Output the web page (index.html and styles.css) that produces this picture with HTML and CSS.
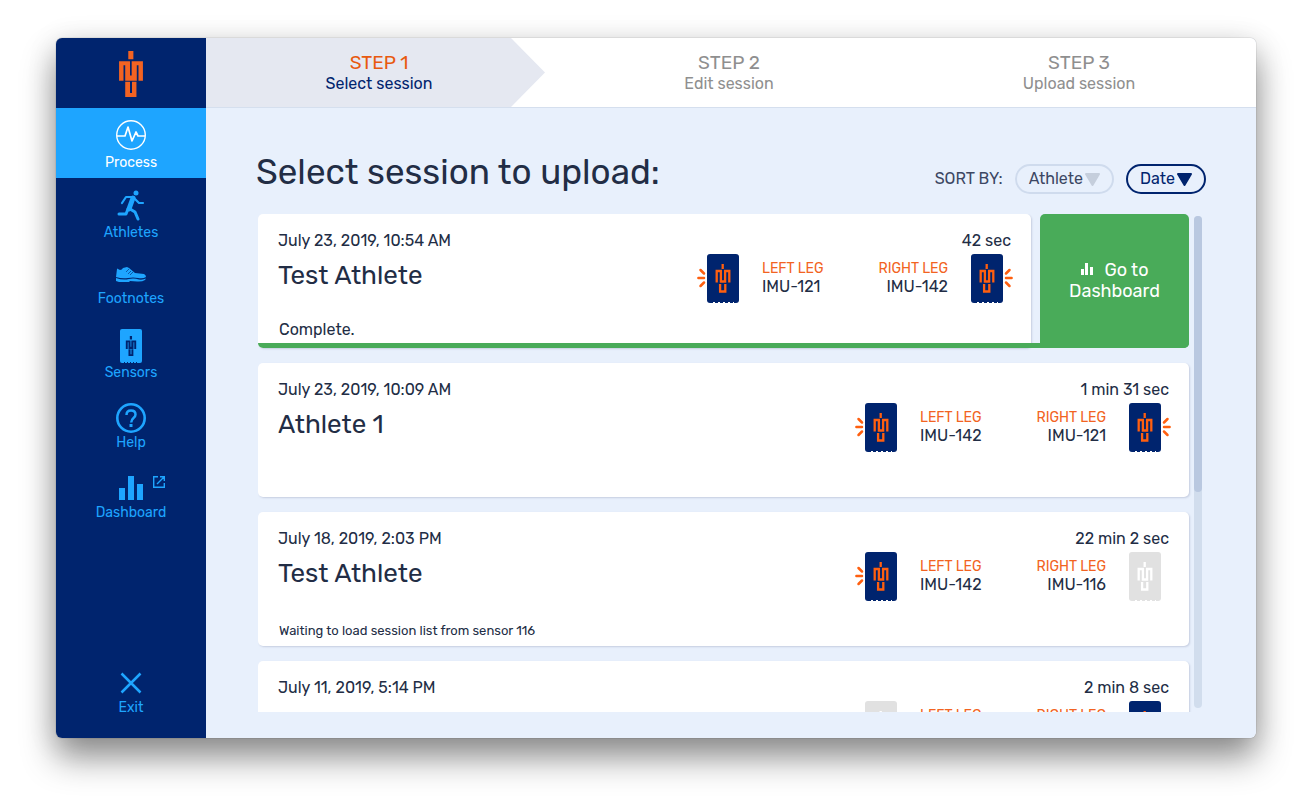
FILE: index.html
```html
<!DOCTYPE html>
<html lang="en">
<head>
  <meta charset="UTF-8">
  <title>Select session</title>
  <link rel="stylesheet" href="styles.css">
</head>
<body>

  <!-- shared shapes -->
  <svg class="defs" aria-hidden="true">
    <symbol id="logo" viewBox="0 0 70 135">
      <path d="M27 0H42V24H27ZM0 30H32V72H37V30H70V87H57V42H52V87H18V42H13V87H0ZM18 90H32V123H38V90H51V135H18Z"/>
    </symbol>
    <symbol id="logo-thin" viewBox="0 0 15 29">
      <path d="M7.200 0V5M1.200 18.500V7H5.400V17.500H9.600V7H13.800V18.500M4.600 20V27.500H9.800V20" fill="none" stroke="currentColor" stroke-width="2.300"/>
    </symbol>
    <symbol id="sensor" viewBox="0 0 32 49">
      <path class="sensor-body" d="M3 0H29Q32 0 32 3V46Q32 49 29 49H3Q0 49 0 46V3Q0 0 3 0Z"/>
      <path d="M6 48.500H27" stroke="#fff" stroke-width="1" stroke-dasharray="2 3"/>
      <use href="#logo-thin" x="8" y="10" width="16" height="29"/>
    </symbol>
    <symbol id="rays" viewBox="0 0 10 20">
      <path d="M3.500 2L7 5.500M1.400 10H7M3.500 18L7 14.500" fill="none" stroke="#ff5f0f" stroke-width="2.500" stroke-linecap="round"/>
    </symbol>
  </svg>

  <div class="window">

    <nav class="sidebar">
      <a class="brand" href="#" aria-label="Home">
        <svg width="24" height="46"><use href="#logo"/></svg>
      </a>
      <a class="nav-item active" href="#">
        <svg width="30" height="34" fill="none" stroke="currentColor">
          <circle cx="15" cy="16" r="14.300" stroke-width="1.400"/>
          <path d="M1 17H9L12 8L16 22L20 13L22 17H29" stroke-width="1.700" stroke-linejoin="round"/>
        </svg>
        <span>Process</span>
      </a>
      <a class="nav-item" href="#">
        <svg width="30" height="34" fill="none" stroke="currentColor" stroke-linecap="round" stroke-linejoin="round">
          <circle cx="20" cy="4" r="2.500" fill="currentColor" stroke="none"/>
          <path d="M6 14L10 8H17L23 14H27" stroke-width="2.200"/>
          <path d="M17 9L13 20" stroke-width="5"/>
          <path d="M12 20L10 25H3M14 20L19 23L22 30" stroke-width="3"/>
        </svg>
        <span>Athletes</span>
      </a>
      <a class="nav-item" href="#">
        <svg width="30" height="25" fill="currentColor">
          <path d="M1 5Q1 4 2 5L4 6Q6 6 7 4L11 3L13 4L19 9L28 10Q30 11 30 13Q27 15 22 14Q17 13 12 14Q6 15 0 13Z"/>
          <path d="M0 14Q7 16.500 13 15Q18 14 23 15.500Q27 16 30 14.500L29 16Q26 18 21 17.500L14 17L13 18H3L0 17Z"/>
          <path d="M10 8L13 5M12 10L15 7M14 11L17 8" stroke="#00246e" stroke-width=".6"/>
        </svg>
        <span>Footnotes</span>
      </a>
      <a class="nav-item" href="#">
        <svg width="22" height="34">
          <path d="M2 0H20Q22 0 22 2V32Q22 34 20 34H2Q0 34 0 32V2Q0 0 2 0Z" fill="currentColor"/>
          <path d="M4 33.500H19" stroke="#00246e" stroke-dasharray="1 2"/>
          <use class="cutout" href="#logo" x="5" y="7" width="12" height="20"/>
        </svg>
        <span>Sensors</span>
      </a>
      <a class="nav-item" href="#">
        <svg width="30" height="34" fill="none" stroke="currentColor">
          <circle cx="15" cy="19" r="13.700" stroke-width="2.600"/>
          <path d="M10.500 16Q10.500 11.500 15 11.500T19.500 15.500Q19.500 17.500 17.500 19T15.200 23.500" stroke-width="2.500"/>
          <path d="M15 25V28" stroke-width="3"/>
        </svg>
        <span>Help</span>
      </a>
      <a class="nav-item" href="#">
        <svg width="70" height="34">
          <path d="M23 19H29V31H23ZM32 7H38V31H32ZM41 15H47V31H41Z" fill="currentColor"/>
          <path d="M62 7.700H57.700V18.300H68.300V14M64 7.700H68.300V12M68 8L61 15" fill="none" stroke="currentColor" stroke-width="1.400"/>
        </svg>
        <span>Dashboard</span>
      </a>
      <a class="nav-item exit" href="#">
        <svg width="30" height="34" fill="none" stroke="currentColor">
          <path d="M5.500 9.500L24.500 28.500M24.500 9.500L5.500 28.500" stroke-width="2.500"/>
        </svg>
        <span>Exit</span>
      </a>
    </nav>

    <div class="content">

      <ol class="steps">
        <li class="step current"><b>STEP 1</b><span>Select session</span></li>
        <li class="step"><b>STEP 2</b><span>Edit session</span></li>
        <li class="step"><b>STEP 3</b><span>Upload session</span></li>
      </ol>

      <main class="page">
        <header class="page-header">
          <h1>Select session to upload:</h1>
          <div class="sort">
            <span class="sort-label">SORT BY:</span>
            <button class="sort-button" type="button">Athlete
              <svg width="15" height="13"><path d="M1 1H14L7.500 12Z"/></svg>
            </button>
            <button class="sort-button selected" type="button">Date
              <svg width="15" height="13"><path d="M1 1H14L7.500 12Z"/></svg>
            </button>
          </div>
        </header>

        <div class="list-area">
          <div class="session-list">

            <div class="session-row complete">
              <article class="card">
                <div class="card-top"><time>July 23, 2019, 10:54 AM</time><span>42 sec</span></div>
                <div class="card-main">
                  <h2>Test Athlete</h2>
                  <div class="legs">
                    <svg class="sensor"><use href="#rays" x="-10" y="14" width="10" height="20"/><use href="#sensor" width="32" height="49"/></svg>
                    <div class="leg"><span>LEFT LEG</span>IMU-121</div>
                    <div class="leg right"><span>RIGHT LEG</span>IMU-142</div>
                    <svg class="sensor"><use href="#rays" x="-42" y="14" width="10" height="20" transform="scale(-1 1)"/><use href="#sensor" width="32" height="49"/></svg>
                  </div>
                </div>
                <p class="status">Complete.</p>
              </article>
              <a class="go-dashboard" href="#">
                <span><svg width="14" height="14"><path d="M1 7H4V13H1ZM5 1H8V13H5ZM10 5H13V13H10Z"/></svg>Go to<br>Dashboard</span>
              </a>
            </div>

            <div class="session-row">
              <article class="card">
                <div class="card-top"><time>July 23, 2019, 10:09 AM</time><span>1 min 31 sec</span></div>
                <div class="card-main">
                  <h2>Athlete 1</h2>
                  <div class="legs">
                    <svg class="sensor"><use href="#rays" x="-10" y="14" width="10" height="20"/><use href="#sensor" width="32" height="49"/></svg>
                    <div class="leg"><span>LEFT LEG</span>IMU-142</div>
                    <div class="leg right"><span>RIGHT LEG</span>IMU-121</div>
                    <svg class="sensor"><use href="#rays" x="-42" y="14" width="10" height="20" transform="scale(-1 1)"/><use href="#sensor" width="32" height="49"/></svg>
                  </div>
                </div>
              </article>
            </div>

            <div class="session-row">
              <article class="card">
                <div class="card-top"><time>July 18, 2019, 2:03 PM</time><span>22 min 2 sec</span></div>
                <div class="card-main">
                  <h2>Test Athlete</h2>
                  <div class="legs">
                    <svg class="sensor"><use href="#rays" x="-10" y="14" width="10" height="20"/><use href="#sensor" width="32" height="49"/></svg>
                    <div class="leg"><span>LEFT LEG</span>IMU-142</div>
                    <div class="leg right"><span>RIGHT LEG</span>IMU-116</div>
                    <svg class="sensor off"><use href="#sensor" width="32" height="49"/></svg>
                  </div>
                </div>
                <p class="status small">Waiting to load session list from sensor 116</p>
              </article>
            </div>

            <div class="session-row">
              <article class="card">
                <div class="card-top"><time>July 11, 2019, 5:14 PM</time><span>2 min 8 sec</span></div>
                <div class="card-main">
                  <h2></h2>
                  <div class="legs">
                    <svg class="sensor off"><use href="#sensor" width="32" height="49"/></svg>
                    <div class="leg"><span>LEFT LEG</span></div>
                    <div class="leg right"><span>RIGHT LEG</span></div>
                    <svg class="sensor"><use href="#sensor" width="32" height="49"/></svg>
                  </div>
                </div>
              </article>
            </div>

          </div>
          <div class="scrollbar"><div class="thumb"></div></div>
        </div>
      </main>
    </div>
  </div>

</body>
</html>
```
FILE: styles.css
```css
* {
  box-sizing: border-box;
}

body {
  margin: 0;
  height: 100vh;
  padding: 38px 56px 74px;
  background: #fff;
  color: #222d45;
  font: 16px/18px Rubik, Roboto, sans-serif;
}

a {
  color: inherit;
  text-decoration: none;
}

h1, h2, p, ol {
  margin: 0;
  padding: 0;
  font-weight: 400;
}

svg {
  display: block;
  flex: none;
}

.defs {
  position: absolute;
  width: 0;
  height: 0;
}

.window {
  display: flex;
  height: 100%;
  border-radius: 6px;
  overflow: hidden;
  box-shadow: 0 0 1px rgba(0,0,0,.6), 0 20px 34px rgba(0,0,0,.42), 0 4px 30px rgba(0,0,0,.12);
}

/* sidebar */
.sidebar {
  display: flex;
  flex-direction: column;
  flex: none;
  width: 150px;
  background: #00246e;
  color: #1ea5ff;
  font-size: 14px;
  line-height: 20px;
}

.brand {
  display: flex;
  justify-content: center;
  align-items: center;
  height: 70px;
  padding-top: 2px;
  fill: #f26322;
}

.nav-item {
  display: flex;
  flex-direction: column;
  align-items: center;
  justify-content: center;
  height: 70px;
  padding-top: 6px;
}

.nav-item.active {
  background: #1ea5ff;
  color: #fff;
}

.nav-item.exit {
  margin-top: auto;
  margin-bottom: 15px;
}

.cutout {
  fill: #00246e;
}

/* steps */
.content {
  display: flex;
  flex-direction: column;
  flex: 1;
  min-width: 0;
  background: #e8f0fc;
}

.steps {
  display: grid;
  grid-template-columns: repeat(3, 1fr);
  flex: none;
  height: 70px;
  background: #fff;
  border-bottom: 1px solid #d5dfee;
  list-style: none;
}

.step {
  display: flex;
  flex-direction: column;
  align-items: center;
  justify-content: center;
  padding-right: 4px;
  color: #8f8f8f;
  line-height: 20px;
}

.step b {
  font-size: 19px;
  font-weight: 400;
  line-height: 22px;
}

.step.current {
  margin-right: 11px;
  padding-right: 0;
  padding-left: 7px;
  background: #e5e8f1;
  color: #00246e;
  clip-path: polygon(0 0, calc(100% - 34px) 0, 100% 50%, calc(100% - 34px) 100%, 0 100%);
}

.step.current b {
  color: #e8590f;
}

/* page */
.page {
  display: flex;
  flex-direction: column;
  flex: 1;
  min-height: 0;
  padding: 42px 50px 26px;
}

.page-header {
  display: flex;
  justify-content: space-between;
  align-items: flex-end;
  margin-bottom: 20px;
}

h1 {
  font-size: 35px;
  line-height: 44px;
}

.sort {
  display: flex;
  align-items: center;
  gap: 12px;
}

.sort-label {
  color: #3c4763;
}

.sort-button {
  display: flex;
  align-items: center;
  gap: 2px;
  height: 30px;
  padding: 0 12px;
  border: 2px solid #cfdbed;
  border-radius: 15px;
  background: none;
  color: #3c4763;
  font: inherit;
}

.sort-button svg {
  fill: #c5cedc;
  stroke: #c5cedc;
  stroke-linejoin: round;
  stroke-width: 2;
}

.sort-button.selected {
  border-color: #00246e;
  color: #00246e;
}

.sort-button.selected svg {
  fill: #00246e;
  stroke: #00246e;
}

/* session list */
.list-area {
  display: flex;
  gap: 2px;
  flex: 1;
  min-height: 0;
  padding: 0 4px 0 2px;
}

.session-list {
  display: flex;
  flex-direction: column;
  gap: 15px;
  flex: 1;
  padding-right: 3px;
  overflow: hidden;
}

.session-row {
  display: flex;
  flex: none;
  gap: 9px;
  position: relative;
  height: 134px;
}

.card {
  flex: 1;
  display: flex;
  flex-direction: column;
  padding: 18px 20px 6px;
  border-radius: 5px;
  background: #fff;
  box-shadow: 1px 1px 2px #c5cde0;
}

.card-top,
.card-main {
  display: flex;
  justify-content: space-between;
}

.card-main {
  margin-top: 4px;
}

h2 {
  font-size: 26px;
  line-height: 44px;
}

.legs {
  display: flex;
  margin-right: 8px;
}

.sensor {
  width: 32px;
  height: 49px;
  color: #ff5f0f;
  fill: #00246e;
  overflow: visible;
}

.sensor.off {
  color: #fff;
  fill: #e1e1e1;
}

.leg {
  width: 116px;
  padding: 6px 0 0 23px;
}

.leg.right {
  padding: 6px 23px 0 0;
  text-align: right;
}

.leg span {
  display: block;
  color: #f26322;
  font-size: 14px;
}

.status {
  margin-top: auto;
  padding-left: 1px;
  margin-bottom: 3px;
}

.status.small {
  margin-bottom: 0;
  font-size: 13px;
}

.complete::after {
  content: "";
  position: absolute;
  left: 0;
  right: 0;
  bottom: 0;
  height: 5px;
  border-radius: 0 0 5px 5px;
  background: #49ab59;
}

.go-dashboard {
  display: flex;
  align-items: center;
  justify-content: center;
  width: 149px;
  border-radius: 5px;
  background: #49ab59;
  color: #fff;
  font-size: 18px;
  line-height: 21px;
  text-align: center;
}

.go-dashboard svg {
  display: inline-block;
  margin-right: 10px;
  fill: #fff;
}

.scrollbar {
  flex: none;
  width: 8px;
  margin: 2px 0 4px;
  border-radius: 4px;
  background: #d1dded;
}

.thumb {
  height: 56%;
  border-radius: 4px;
  background: #b9c8e0;
}
```
